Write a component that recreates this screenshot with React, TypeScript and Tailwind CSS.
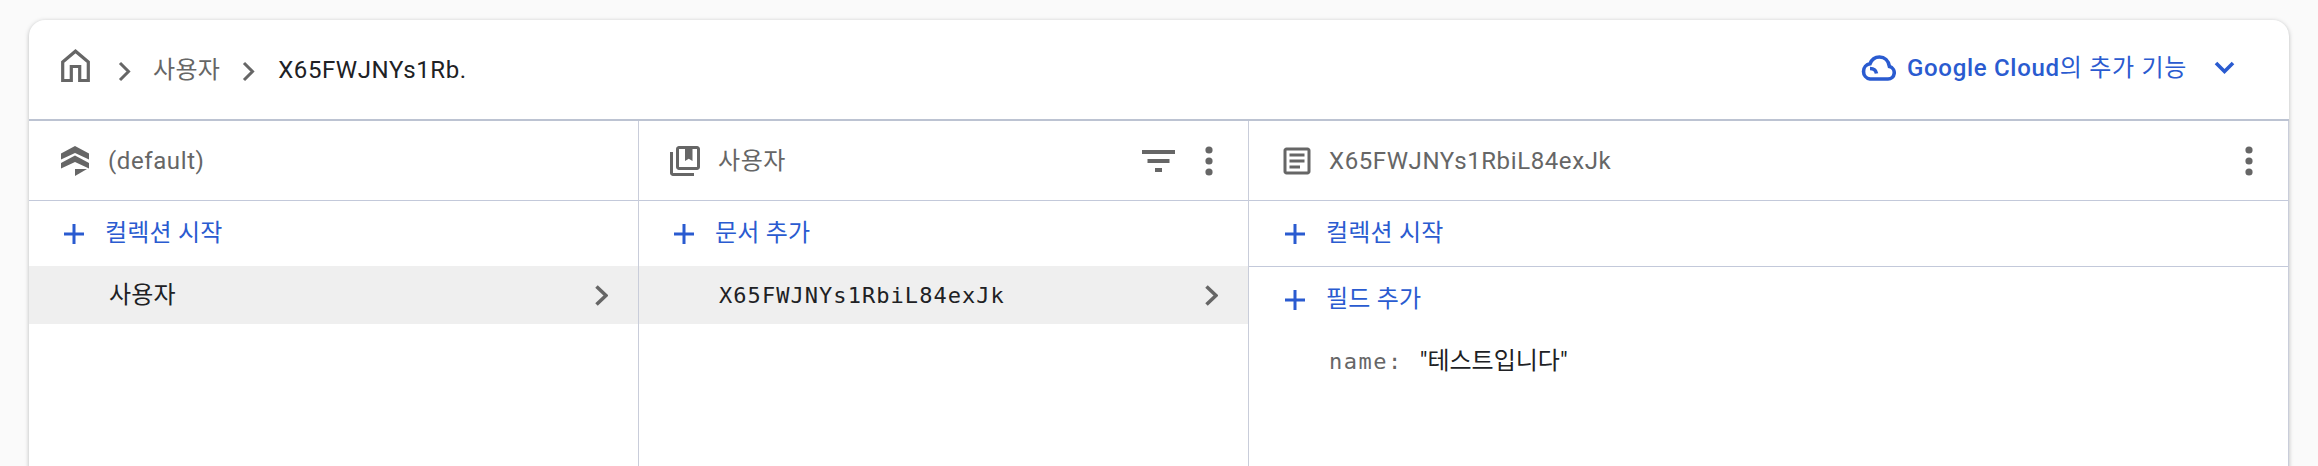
const FONT = "font-['Roboto','Noto_Sans_CJK_KR',sans-serif]";

function Plus() {
  return (
    <svg width="20" height="20" viewBox="0 0 20 20" className="shrink-0">
      <path d="M0 10h20M10 0v20" stroke="#2a5bd0" strokeWidth="3" fill="none" />
    </svg>
  );
}

function ChevronRight({ className, thick }: { className?: string; thick?: boolean }) {
  return (
    <svg width="13" height="21" viewBox="0 0 13 21" className={"shrink-0 " + (className ?? "")}>
      <path d={thick ? "M1.500 1.500l9.500 9-9.500 9" : "M2 2l8.5 8.5L2 19"} stroke="#666" strokeWidth={thick ? 3.6 : 3} fill="none" />
    </svg>
  );
}

function Kebab() {
  return (
    <svg width="8" height="30" viewBox="0 0 8 30" className="shrink-0">
      <circle cx="4" cy="4" r="3.6" fill="#666" />
      <circle cx="4" cy="15" r="3.6" fill="#666" />
      <circle cx="4" cy="26" r="3.6" fill="#666" />
    </svg>
  );
}

function Toolbar({ icon, title, children }: { icon: React.ReactNode; title: string; children?: React.ReactNode }) {
  return (
    <div className="h-[80px] flex items-center border-b border-[#c3c9da] shrink-0">
      {icon}
      <span className="text-[24px] tracking-[0.6px] text-[#666]">{title}</span>
      <div className="ml-auto flex items-center">{children}</div>
    </div>
  );
}

function AddRow({ label, x, border }: { label: string; x: string; border?: boolean }) {
  return (
    <div className={"h-[65px] flex items-center text-[#2a5bd0] text-[24px] tracking-[0.2px] shrink-0 " + x + (border ? " border-b border-[#c3c9da] h-[66px]" : "")}>
      <Plus />
      <span className="ml-[21px] mb-[2px]">{label}</span>
    </div>
  );
}

function SelectedRow({ label, mono }: { label: string; mono?: boolean }) {
  return (
    <div className="h-[58px] bg-[#efefef] flex items-center pl-[80px] pr-[30px] shrink-0">
      <span className={mono ? "font-['DejaVu_Sans_Mono',monospace] text-[22px] tracking-[1.05px] text-[#202124]" : "text-[24px] tracking-[0.2px] text-[#202124]"}>
        {label}
      </span>
      <ChevronRight className="ml-auto" thick />
    </div>
  );
}

export default function App() {
  return (
    <div className={"w-[2318px] h-[466px] overflow-hidden bg-[#fafafa] pt-[20px] pl-[29px] " + FONT}>
      <div className="w-[2260px] h-[480px] bg-white rounded-t-[16px] shadow-[0_1px_4px_rgba(60,64,67,0.35)] flex flex-col">
        {/* Header */}
        <div className="h-[101px] border-b-2 border-[#bcc3d2] flex items-start pt-[29px] shrink-0">
          <svg width="29" height="33" viewBox="0 0 29 33" className="ml-[32px] shrink-0">
            <path d="M1.7 31.5V13L14.5 2.2 27.3 13v18.5h-8.6V17.5h-8.4v14z" stroke="#666" strokeWidth="3.2" fill="none" />
          </svg>
          <ChevronRight className="ml-[28px] mt-[12px]" />
          <span className="ml-[22px] mt-[3px] text-[24px] tracking-[0.3px] text-[#666]">사용자</span>
          <ChevronRight className="ml-[22px] mt-[12px]" />
          <span className="ml-[23px] mt-[3px] text-[24px] tracking-[0.6px] text-[#202124]">X65FWJNYs1Rb.</span>
          <div className="ml-auto mr-[54px] flex items-center text-[#2a5bd0] text-[24px] tracking-[0.7px] mt-[1px]">
            <svg width="35" height="26" viewBox="0 0 35 26" className="shrink-0">
              <path
                d="M9 24h18a6.300 6.300 0 0 0 1.500-12.400C27.500 5.500 23.500 2 18.500 2c-4.500 0-8 2.800-9.500 6.800A7.700 7.700 0 0 0 9 24zM9 13.500c3.500 0 6 2 6.500 5"
                stroke="#2a5bd0"
                strokeWidth="3.600"
                fill="none"
              />
            </svg>
            <span className="ml-[11px]"><span className="font-medium">Google Cloud</span>의 추가 기능</span>
            <svg width="21" height="14" viewBox="0 0 21 14" className="ml-[27px] shrink-0">
              <path d="M2 2l8.500 8.500L19 2" stroke="#2a5bd0" strokeWidth="3.600" fill="none" />
            </svg>
          </div>
        </div>

        <div className="flex flex-1">
          {/* Root column */}
          <div className="w-[610px] border-r border-[#c9cdda] flex flex-col">
            <Toolbar
              title="(default)"
              icon={
                <svg width="28" height="30" viewBox="0 0 28 30" className="ml-[32px] mr-[19px] shrink-0">
                  <path d="M14 0l14 7.500v6L14 7 0 13.500v-6z" fill="#666" />
                  <path d="M14 9.500l14 7.500v5.500L14 16 0 22.500V17z" fill="#666" />
                  <path d="M14 23h12L14 30z" fill="#666" />
                </svg>
              }
            />
            <AddRow label="컬렉션 시작" x="pl-[35px]" />
            <SelectedRow label="사용자" />
          </div>

          {/* Collection column */}
          <div className="w-[610px] border-r border-[#c9cdda] flex flex-col">
            <Toolbar
              title="사용자"
              icon={
                <svg width="36" height="36" viewBox="0 0 24 24" className="ml-[28px] mr-[15px] shrink-0" fill="#666">
                  <path d="M4 6H2v14c0 1.100.9 2 2 2h14v-2H4V6zm16-4H8c-1.100 0-2 .9-2 2v12c0 1.100.9 2 2 2h12c1.100 0 2-.9 2-2V4c0-1.100-.9-2-2-2zm0 14H8V4h4v8l2.500-1.500L17 12V4h3v12z" />
                </svg>
              }
            >
              <svg width="33" height="22" viewBox="0 0 33 22" className="shrink-0" fill="#666">
                <rect x="0" y="0" width="33" height="4" />
                <rect x="5.500" y="9" width="22" height="4" />
                <rect x="13" y="18" width="7" height="4" />
              </svg>
              <div className="ml-[30px] mr-[35px]">
                <Kebab />
              </div>
            </Toolbar>
            <AddRow label="문서 추가" x="pl-[35px]" />
            <SelectedRow label="X65FWJNYs1RbiL84exJk" mono />
          </div>

          {/* Document column */}
          <div className="flex-1 flex flex-col border-r border-[#c9cdda]">
            <Toolbar
              title="X65FWJNYs1RbiL84exJk"
              icon={
                <svg width="36" height="36" viewBox="0 0 24 24" className="ml-[30px] mr-[14px] shrink-0" fill="#666">
                  <path d="M19 5v14H5V5h14m0-2H5c-1.100 0-2 .9-2 2v14c0 1.100.9 2 2 2h14c1.100 0 2-.9 2-2V5c0-1.100-.9-2-2-2z" />
                  <path d="M14 17H7v-2h7v2zm3-4H7v-2h10v2zm0-4H7V7h10v2z" />
                </svg>
              }
            >
              <div className="mr-[35px]">
                <Kebab />
              </div>
            </Toolbar>
            <AddRow label="컬렉션 시작" x="pl-[36px]" border />
            <AddRow label="필드 추가" x="pl-[36px]" />
            <div className="pl-[80px] pt-[11px] flex items-center text-[24px]">
              <span className="font-['DejaVu_Sans_Mono',monospace] text-[22px] tracking-[1.5px] text-[#666]">name:</span>
              <span className="ml-[17px] text-[#202124]">"테스트입니다"</span>
            </div>
          </div>
        </div>
      </div>
    </div>
  );
}
